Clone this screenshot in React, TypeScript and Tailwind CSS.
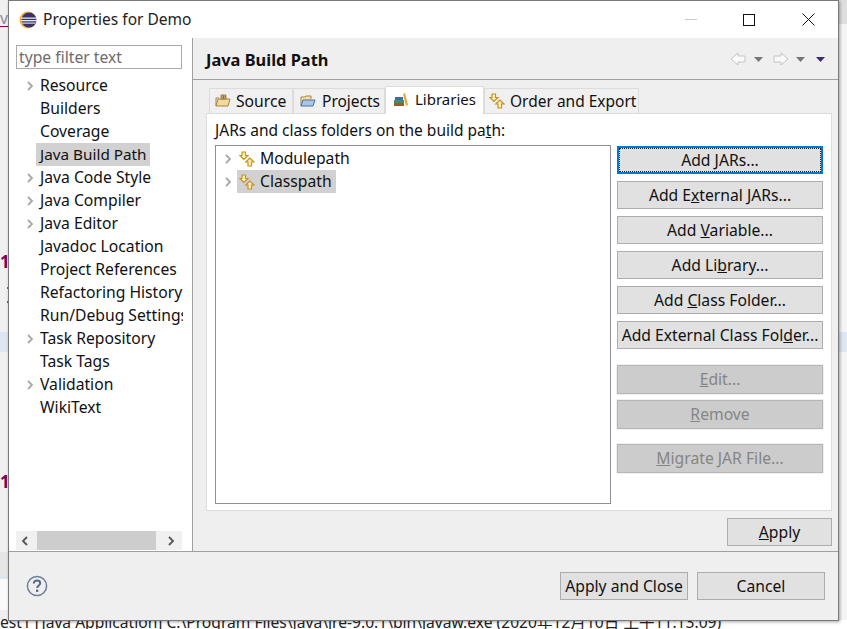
import type { ReactNode } from "react";

const treeItems: [string, boolean][] = [
  ["Resource", true],
  ["Builders", false],
  ["Coverage", false],
  ["Java Build Path", false],
  ["Java Code Style", true],
  ["Java Compiler", true],
  ["Java Editor", true],
  ["Javadoc Location", false],
  ["Project References", false],
  ["Refactoring History", false],
  ["Run/Debug Settings", false],
  ["Task Repository", true],
  ["Task Tags", false],
  ["Validation", true],
  ["WikiText", false],
];

function Chevron() {
  return (
    <svg width="8" height="10" viewBox="0 0 8 10" className="shrink-0">
      <path d="M2 1 L6 5 L2 9" fill="none" stroke="#a8a8a8" strokeWidth="1.8" />
    </svg>
  );
}

function ScrollArrow({ left }: { left?: boolean }) {
  return (
    <svg width="10" height="12" viewBox="0 0 10 12">
      <path d={left ? "M7 2 L3 6 L7 10" : "M3 2 L7 6 L3 10"} fill="none" stroke="#555" strokeWidth="1.8" />
    </svg>
  );
}

function EclipseLogo() {
  return (
    <svg width="18" height="18" viewBox="0 0 18 18" className="shrink-0">
      <circle cx="9" cy="9" r="8.5" fill="#f2a93c" />
      <circle cx="10" cy="9" r="7.5" fill="#37316f" />
      <rect x="2" y="6.5" width="16" height="1.3" fill="#e8e8f2" />
      <rect x="2" y="9" width="16" height="1.3" fill="#e8e8f2" />
      <rect x="2.5" y="11.5" width="14" height="1.2" fill="#d8d8e8" />
    </svg>
  );
}

function PathArrows() {
  return (
    <svg width="16" height="16" viewBox="0 0 16 16" className="shrink-0">
      <path d="M3 1 H6.5 V4.5 H9 L4.8 8.5 L0.8 4.5 H3 Z" fill="#fdf0b8" stroke="#c8921e" strokeWidth="1.2" />
      <path d="M9 15 H12.5 V11 H15 L10.8 7 L6.8 11 H9 Z" fill="#fdf0b8" stroke="#c8921e" strokeWidth="1.2" />
    </svg>
  );
}

function SourceIcon() {
  return (
    <svg width="16" height="16" viewBox="0 0 16 16" className="shrink-0">
      <path d="M1 13 L3 6 H15 L13 13 Z" fill="#f0d9a0" stroke="#a98340" />
      <path d="M1 13 V5 H4" fill="none" stroke="#a98340" />
      <path d="M6 2 H11 V6 H6 Z M8.5 2 V6 M6 4 H11" fill="#d9b878" stroke="#8a6a3a" strokeWidth="0.8" />
    </svg>
  );
}

function ProjectsIcon() {
  return (
    <svg width="16" height="16" viewBox="0 0 16 16" className="shrink-0">
      <path d="M1 13 V4 H5 L6 3 H11 V6" fill="#f4e2a8" stroke="#a98340" />
      <path d="M1 13 L3 7 H15 L13 13 Z" fill="#a9c6e8" stroke="#4c6f9f" />
    </svg>
  );
}

function LibrariesIcon() {
  return (
    <svg width="16" height="16" viewBox="0 0 16 16" className="shrink-0">
      <rect x="1" y="11" width="10" height="3" fill="#a3562a" />
      <rect x="1" y="8" width="10" height="3" fill="#3f8f6f" />
      <rect x="2" y="5" width="8" height="3" fill="#3a6ea5" />
      <path d="M10 2 L12 1 L15 13 L13 14 Z" fill="#e8a830" />
    </svg>
  );
}

function HelpIcon() {
  return (
    <svg width="22" height="22" viewBox="0 0 22 22">
      <circle cx="11" cy="11" r="9.6" fill="none" stroke="#6d7f9c" strokeWidth="1.5" />
      <path d="M7.8 8.6 C7.8 6.6 9.3 5.6 11 5.6 C12.9 5.6 14.2 6.7 14.2 8.3 C14.2 10.4 11.2 10.7 11.2 13" fill="none" stroke="#56698a" strokeWidth="2" />
      <rect x="10" y="14.6" width="2.3" height="2.3" fill="#56698a" />
    </svg>
  );
}

function Tab({ icon, label, className }: { icon: ReactNode; label: string; className: string }) {
  return (
    <div className={"mt-[2px] flex h-[25px] items-center border border-b-0 border-[#dcdcdc] bg-[#f0f0f0] whitespace-nowrap " + className}>
      {icon}
      <span>{label}</span>
    </div>
  );
}

function ActiveTab({ icon, label }: { icon: ReactNode; label: string }) {
  return (
    <div className="relative z-10 -mb-px flex h-[28px] w-[99px] items-start gap-[6px] border border-b-0 border-[#dcdcdc] bg-white pl-[7px] pt-[2px] text-[15px]">
      <span className="mt-[3px]">{icon}</span>
      <span>{label}</span>
    </div>
  );
}

function Btn({ children, className }: { children: ReactNode; className?: string }) {
  return (
    <div className={"flex items-center justify-center border border-[#adadad] bg-[#e1e1e1] whitespace-nowrap " + (className ?? "")}>
      {children}
    </div>
  );
}

function SideBtn({ children }: { children: ReactNode }) {
  return <Btn className="h-[28px] w-[206px]">{children}</Btn>;
}

function DisabledBtn({ children }: { children: ReactNode }) {
  return (
    <div className="flex h-[29px] w-[206px] items-center justify-center border border-[#b6b6b6] bg-[#cccccc] text-[#858585] outline outline-1 outline-[#f0f0f0]">
      {children}
    </div>
  );
}

export default function App() {
  return (
    <div
      className="relative h-[629px] w-[847px] overflow-hidden bg-[#f0f0f0] text-[15.7px] leading-[21px] text-[#111]"
      style={{ fontFamily: '"Noto Sans", "Noto Sans CJK SC", sans-serif' }}
    >
      {/* stuff from the eclipse window behind the dialog */}
      <div className="absolute left-0 top-[8px] text-[#8a8aa0]">v</div>
      <div className="absolute left-0 top-[26px] h-px w-[8px] bg-[#7f0055]" />
      <div className="absolute left-0 top-[251px] text-[17px] font-bold text-[#7f0055]">1</div>
      <div className="absolute left-0 top-[471px] text-[17px] font-bold text-[#7f0055]">1</div>
      <div className="absolute left-[7px] top-[287px] h-[2px] w-px bg-[#a05050]" />
      <div className="absolute left-[7px] top-[301px] h-[2px] w-px bg-[#a05050]" />
      <div className="absolute left-0 top-[332px] h-[20px] w-[8px] bg-[#dfe5f2]" />
      <div className="absolute left-0 top-[552px] h-[23px] w-[8px] bg-[#e6e6e6]" />
      <div className="absolute left-0 top-[575px] h-[35px] w-[8px] bg-[#fafafa]" />
      <div className="absolute left-0 top-[575px] h-[4px] w-[8px] bg-[#dfe5f2]" />
      <div className="absolute right-0 top-0 h-[24px] w-[8px] bg-[#dedede]" />
      <div className="absolute right-0 top-[24px] h-[605px] w-[8px] bg-[#f5f5f5]" />
      <div className="absolute right-0 top-[332px] h-[20px] w-[8px] bg-[#dfe5f2]" />
      <div className="absolute bottom-0 left-0 h-[9px] w-full bg-white" />
      <div className="absolute left-0 top-[612px] whitespace-nowrap text-[15.6px] leading-[21px] text-[#222]">
        est1 [Java Application] C:\Program Files\Java\jre-9.0.1\bin\javaw.exe (2020年12月10日 上午11:13:09)
      </div>

      {/* dialog window */}
      <div className="absolute left-[8px] top-0 flex h-[621px] w-[831px] flex-col border border-[#7a7a7a] bg-white shadow-[1px_1px_3px_rgba(0,0,0,0.35)]">
        <div className="flex h-[37px] shrink-0 items-center bg-white pl-[10px]">
          <EclipseLogo />
          <span className="ml-[6px] flex-1 text-[15.5px] text-[#222]">Properties for Demo</span>
          <div className="flex w-[45px] justify-center">
            <div className="h-px w-[12px] bg-[#c8c8c8]" />
          </div>
          <div className="ml-[13px] mr-[7px] flex w-[45px] justify-center">
            <div className="h-[12px] w-[12px] border border-[#111]" />
          </div>
          <div className="flex w-[60px] justify-center">
            <svg width="13" height="13" viewBox="0 0 13 13">
              <path d="M0.5 0.5 L12.5 12.5 M12.5 0.5 L0.5 12.5" stroke="#111" strokeWidth="1" />
            </svg>
          </div>
        </div>

        <div className="flex min-h-0 flex-1">
          <div className="flex w-[184px] shrink-0 flex-col border-r border-[#a0a0a0] bg-white">
            <div className="mx-[7px] mt-[7px] flex h-[24px] w-[166px] items-center border border-[#a9a9a9] pl-[2px] text-[#6d6d6d]">
              type filter text
            </div>
            <div className="mt-[5px] flex flex-1 flex-col overflow-hidden">
              {treeItems.map(([label, arrow]) => (
                <div key={label} className="flex h-[23px] w-[174px] shrink-0 items-center overflow-hidden whitespace-nowrap">
                  <div className="flex w-[27px] shrink-0 justify-end pr-[2px]">{arrow && <Chevron />}</div>
                  {label === "Java Build Path" ? (
                    <span className="w-[114px] bg-[#d1d1d1] pl-[4px] text-[15.3px] leading-[23px]">{label}</span>
                  ) : (
                    <span className="px-[4px] leading-[23px]">{label}</span>
                  )}
                </div>
              ))}
            </div>
            <div className="mb-[1px] ml-[7px] flex h-[19px] w-[166px] items-center bg-[#f0f0f0]">
              <div className="flex w-[21px] justify-center pr-[3px]"><ScrollArrow left /></div>
              <div className="h-[19px] w-[119px] bg-[#cdcdcd]" />
              <div className="flex flex-1 justify-center pl-[4px]"><ScrollArrow /></div>
            </div>
          </div>

          <div className="flex min-w-0 flex-1 flex-col bg-[#efefef]">
            <div className="flex h-[42px] shrink-0 items-center border-b border-[#a0a0a0] pl-[13px] pr-[12px]">
              <span className="flex-1 pt-[1px] text-[16.4px] font-bold text-[#111]">Java Build Path</span>
              <svg width="96" height="16" viewBox="0 0 96 16">
                <path d="M1 8 L8 2 V5 H15 V11 H8 V14 Z" fill="#fafafa" stroke="#c4c4c4" />
                <path d="M24 6 H33 L28.5 11 Z" fill="#777" />
                <path d="M58 8 L51 2 V5 H44 V11 H51 V14 Z" fill="#fafafa" stroke="#c4c4c4" />
                <path d="M66 6 H75 L70.5 11 Z" fill="#777" />
                <path d="M86 6 H95 L90.5 11 Z" fill="#3d2a70" />
              </svg>
            </div>

            <div className="ml-[13px] mr-[6px] mt-[6px] flex flex-col">
              <div className="flex pl-[3px]">
                <div className="w-[84px]"><Tab icon={<SourceIcon />} label="Source" className="gap-[5px] pl-[5px]" /></div>
                <div className="w-[92px]"><Tab icon={<ProjectsIcon />} label="Projects" className="gap-[6px] pl-[6px] text-[15.5px]" /></div>
                <ActiveTab icon={<LibrariesIcon />} label="Libraries" />
                <div className="w-[155px]"><Tab icon={<PathArrows />} label="Order and Export" className="gap-[5px] pl-[4px] text-[15.5px]" /></div>
              </div>
              <div className="flex h-[398px] flex-col border border-[#dcdcdc] bg-white pl-[8px] pr-[7px]">
                <div className="mt-[6px] h-[21px] text-[15.5px]">
                  JARs and class folders on the build pa<u>t</u>h:
                </div>
                <div className="mt-[4px] flex gap-[6px]">
                  <div className="h-[359px] w-[396px] shrink-0 border border-[#8a8f99] bg-white pl-[8px] pt-[1px]">
                    {["Modulepath", "Classpath"].map((name) => (
                      <div key={name} className="flex h-[23px] items-center">
                        <Chevron />
                        <div className={"ml-[5px] flex h-[23px] items-center gap-[5px] pl-[2px] pr-[4px] " + (name === "Classpath" ? "bg-[#d1d1d1]" : "")}>
                          <PathArrows />
                          <span className="pb-[1px]">{name}</span>
                        </div>
                      </div>
                    ))}
                  </div>
                  <div className="flex flex-1 flex-col pt-[1px]">
                    <div className="flex h-[28px] w-[206px] items-center justify-center border-2 border-[#0078d7] bg-[#e1e1e1] outline-1 -outline-offset-3 outline-dotted outline-[#222]">
                      <span>Add <u>J</u>ARs...</span>
                    </div>
                    <div className="mt-[7px] flex flex-col gap-[7px]">
                      <SideBtn><span>Add E<u>x</u>ternal JARs...</span></SideBtn>
                      <SideBtn><span>Add <u>V</u>ariable...</span></SideBtn>
                      <SideBtn><span>Add Li<u>b</u>rary...</span></SideBtn>
                      <SideBtn><span>Add <u>C</u>lass Folder...</span></SideBtn>
                      <SideBtn><span>Add External Class Fol<u>d</u>er...</span></SideBtn>
                    </div>
                    <div className="mt-[16px] flex flex-col gap-[6px]">
                      <DisabledBtn><span><u>E</u>dit...</span></DisabledBtn>
                      <DisabledBtn><span><u>R</u>emove</span></DisabledBtn>
                    </div>
                    <div className="mt-[15px]">
                      <DisabledBtn><span><u>M</u>igrate JAR File...</span></DisabledBtn>
                    </div>
                  </div>
                </div>
              </div>
            </div>
            <div className="mr-[6px] mt-[7px] flex justify-end">
              <Btn className="h-[28px] w-[105px]"><span><u>A</u>pply</span></Btn>
            </div>
          </div>
        </div>

        <div className="flex h-[69px] shrink-0 items-start border-t border-[#a0a0a0] bg-[#efefef] pl-[17px] pr-[13px] pt-[20px]">
          <div className="mt-[3px] flex-1"><HelpIcon /></div>
          <Btn className="h-[28px] w-[128px] pt-[1px]">Apply and Close</Btn>
          <Btn className="ml-[9px] h-[28px] w-[128px] pt-[1px]">Cancel</Btn>
        </div>
      </div>
    </div>
  );
}
